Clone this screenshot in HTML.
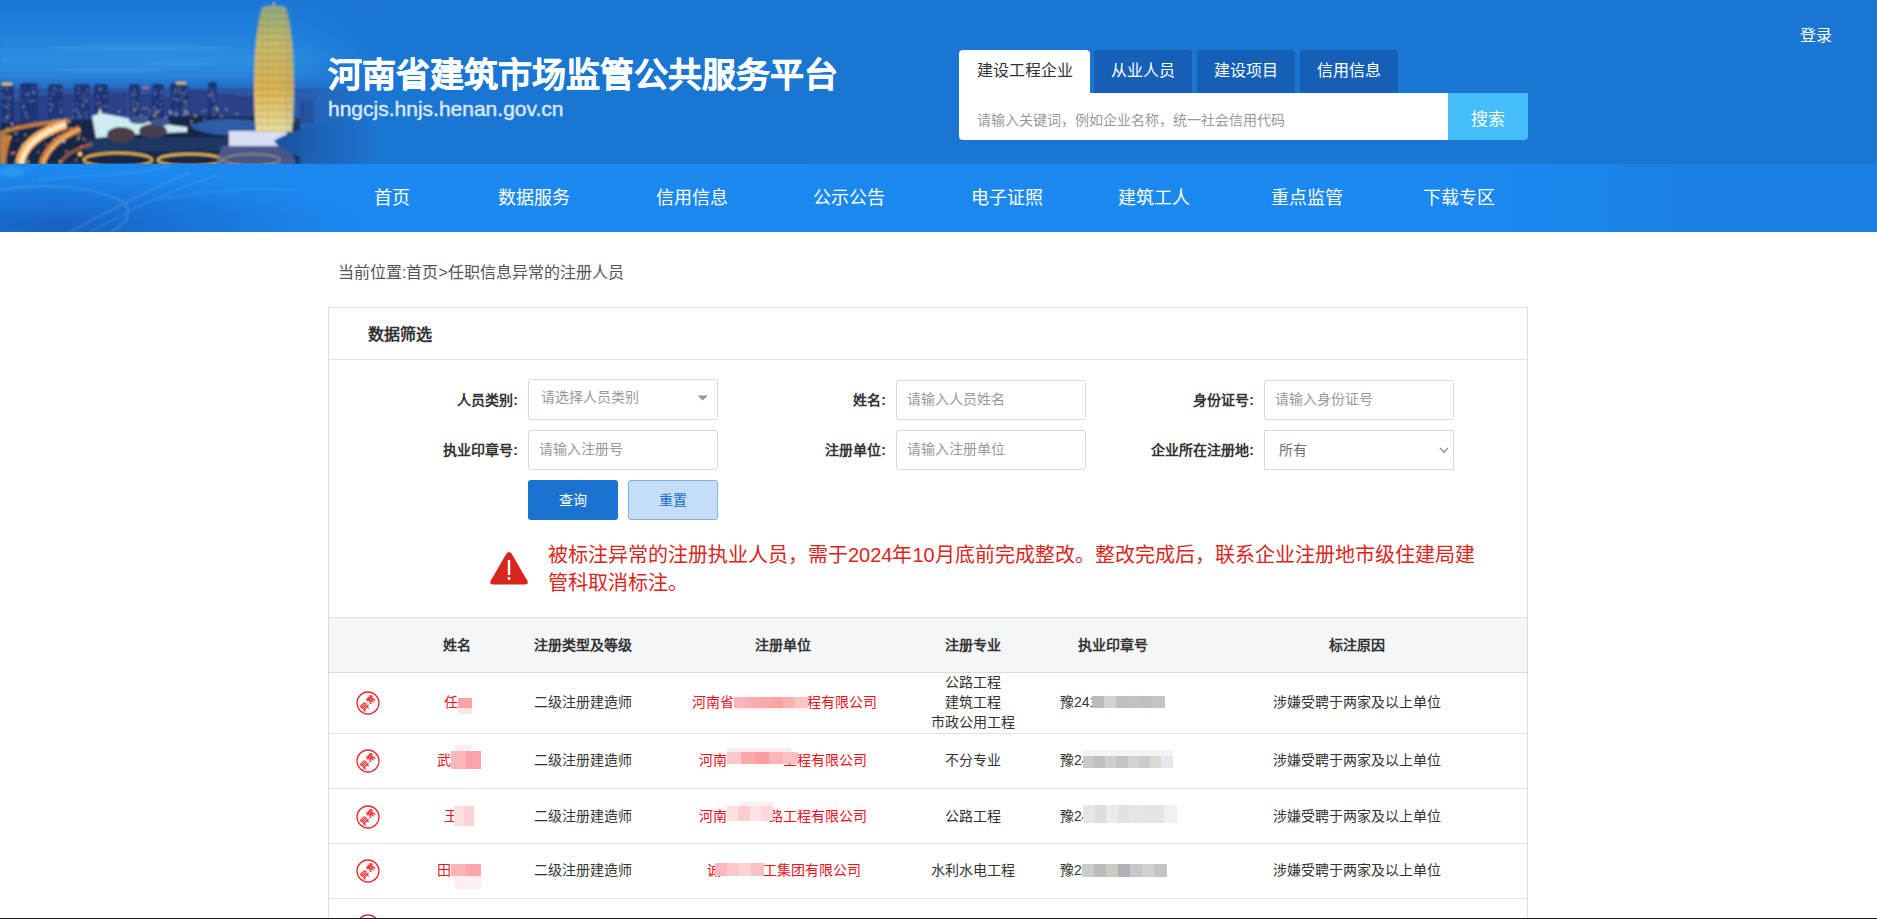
<!DOCTYPE html>
<html lang="zh-CN"><head><meta charset="utf-8">
<style>
*{margin:0;padding:0;box-sizing:border-box}
html,body{width:1877px;height:919px;overflow:hidden;background:#fff}
body{font-family:"Liberation Sans",sans-serif;position:relative;color:#333}
.abs{position:absolute;white-space:nowrap}
#hdr{position:absolute;left:0;top:0;width:1877px;height:164px;background:#1a76d3}
#nav{position:absolute;left:0;top:164px;width:1877px;height:68px;background:linear-gradient(90deg,#1b89f1 0%,#1b88f0 80%,#1a86ec 84%,#1a7fe2 91%,#1a80e3 100%)}
#city{position:absolute;left:0;top:0;width:380px;height:232px}
.title{left:328px;top:51px;font-size:34px;font-weight:bold;-webkit-text-stroke:0.4px #fff;color:#fff;line-height:48px}
.url{left:328px;top:96px;font-size:21px;color:#d6e5f6;line-height:26px;-webkit-text-stroke:0.5px #d6e5f6}
.login{left:1800px;top:25px;font-size:16px;color:#fff;line-height:22px}
.tab{position:absolute;top:50px;height:43px;background:#155fb6;border-radius:4px 4px 0 0;color:#fff;font-size:16px;line-height:42px;text-align:center}
.tab.on{background:#fff;color:#333}
.search{position:absolute;left:959px;top:93px;width:489px;height:47px;background:#fff;border-radius:0 0 0 4px}
.search span{position:absolute;left:18px;top:4px;line-height:47px;font-size:14px;color:#999}
.sbtn{position:absolute;left:1448px;top:93px;width:80px;height:47px;background:#45bdfb;border-radius:0 0 4px 0;color:#fff;font-size:17px;line-height:54px;text-align:center}
.nv{position:absolute;top:185px;font-size:18px;color:#fff;line-height:26px}
.crumb{left:338px;top:262px;font-size:16px;color:#555;line-height:22px}
#panel{position:absolute;left:328px;top:307px;width:1200px;height:700px;border:1px solid #dcdcdc;border-bottom:none}
.ph{position:absolute;left:0;top:0;width:1198px;height:52px;border-bottom:1px solid #e2e2e2}
.ph b{position:absolute;left:39px;top:15px;font-size:16px;line-height:24px;color:#333}
.lbl{position:absolute;font-size:14px;font-weight:bold;color:#333;line-height:20px;text-align:right}
.inp{position:absolute;width:190px;height:40px;border:1px solid #d9d9d9;border-radius:3px;background:#fff}
.inp span{position:absolute;left:10px;top:0;line-height:36px;font-size:14px;color:#999}
.btn{position:absolute;top:480px;width:90px;height:40px;border-radius:3px;font-size:14px;line-height:40px;text-align:center}
.warn{position:absolute;left:548px;top:541px;width:940px;font-size:20px;line-height:28px;color:#d9261c;white-space:normal}
#thead{position:absolute;left:329px;top:617px;width:1198px;height:56px;background:#f5f6f8;border-top:1px solid #dedede;border-bottom:1px solid #dedede}
.th{position:absolute;font-size:14px;font-weight:bold;color:#333;line-height:20px;text-align:center;white-space:nowrap}
.hr{position:absolute;left:329px;width:1198px;height:1px;background:#e0e0e0}
.td{position:absolute;font-size:14px;color:#333;line-height:20px;text-align:center;white-space:nowrap}
.red{color:#f2101a}
.stamp{position:absolute;left:356px;width:24px;height:24px}
</style></head><body>
<div id="hdr"></div>
<div id="nav"></div>
<svg id="city" width="380" height="232" viewBox="0 0 380 232">
<defs>
<linearGradient id="sky" x1="0" y1="0" x2="0" y2="164" gradientUnits="userSpaceOnUse"><stop offset="0" stop-color="#1a78d6"/><stop offset="0.2" stop-color="#1e80dc"/><stop offset="0.36" stop-color="#2d8fe2"/><stop offset="0.46" stop-color="#2a84da"/><stop offset="0.52" stop-color="#2470c8"/><stop offset="1" stop-color="#24509a"/></linearGradient>
<linearGradient id="tw" x1="0" y1="0" x2="0" y2="1"><stop offset="0" stop-color="#8eaa82"/><stop offset="0.3" stop-color="#c8bc6c"/><stop offset="0.65" stop-color="#dcb452"/><stop offset="1" stop-color="#ece2a4"/></linearGradient>
<linearGradient id="road" x1="0" y1="1" x2="1" y2="0"><stop offset="0" stop-color="#ffe8c0"/><stop offset="0.5" stop-color="#f0a040"/><stop offset="1" stop-color="#e88830"/></linearGradient>
<linearGradient id="fade" x1="0" y1="0" x2="1" y2="0"><stop offset="0" stop-color="#1a76d3" stop-opacity="0"/><stop offset="0.4" stop-color="#1a76d3" stop-opacity="0.5"/><stop offset="1" stop-color="#1a76d3" stop-opacity="1"/></linearGradient>
<filter id="soft" x="-5%" y="-5%" width="110%" height="110%"><feGaussianBlur stdDeviation="0.8"/></filter>
<clipPath id="imgclip"><rect x="0" y="0" width="380" height="164"/></clipPath>
</defs>
<g clip-path="url(#imgclip)"><g filter="url(#soft)"><rect x="0" y="0" width="380" height="164" fill="url(#sky)"/>
<ellipse cx="140" cy="48" rx="90" ry="3" fill="#b0d4f4" opacity="0.1"/>
<ellipse cx="110" cy="70" rx="60" ry="1.5" fill="#b0d4f4" opacity="0.15"/>
<ellipse cx="180" cy="64" rx="40" ry="1.5" fill="#b0d4f4" opacity="0.12"/>
<rect x="0" y="88" width="380" height="36" fill="#2e54a4"/>
<rect x="0" y="100" width="22" height="24" fill="#2a4088" rx="1"/>
<rect x="38" y="96" width="12" height="28" fill="#2a4088" rx="1"/>
<rect x="60" y="94" width="16" height="30" fill="#2a4088" rx="1"/>
<rect x="84" y="94" width="12" height="30" fill="#2a4088" rx="1"/>
<rect x="105" y="92" width="22" height="32" fill="#2a4088" rx="1"/>
<rect x="138" y="94" width="16" height="30" fill="#2a4088" rx="1"/>
<rect x="160" y="97" width="14" height="27" fill="#2a4088" rx="1"/>
<rect x="186" y="90" width="22" height="34" fill="#2a4088" rx="1"/>
<rect x="214" y="94" width="22" height="30" fill="#2a4088" rx="1"/>
<rect x="236" y="96" width="20" height="28" fill="#2a4088" rx="1"/>
<rect x="300" y="100" width="14" height="24" fill="#2a4088" rx="1"/>
<rect x="0" y="84" width="14" height="41" fill="#1e3478" rx="3"/>
<rect x="6.0" y="106.6" width="1.4" height="1.2" fill="#80a8e8" opacity="0.6"/>
<rect x="6.0" y="116.9" width="1.4" height="1.2" fill="#a8c8f8" opacity="0.6"/>
<rect x="3.0" y="104.9" width="1.4" height="1.2" fill="#a8c8f8" opacity="0.6"/>
<rect x="2.0" y="97.6" width="1.4" height="1.2" fill="#f0d080" opacity="0.6"/>
<rect x="6.9" y="118.2" width="1.4" height="1.2" fill="#f0d080" opacity="0.6"/>
<rect x="7.5" y="100.9" width="1.4" height="1.2" fill="#80a8e8" opacity="0.6"/>
<rect x="8.2" y="108.5" width="1.4" height="1.2" fill="#a8c8f8" opacity="0.6"/>
<rect x="7.9" y="116.1" width="1.4" height="1.2" fill="#f0d080" opacity="0.6"/>
<rect x="1.7" y="93.7" width="1.4" height="1.2" fill="#a8c8f8" opacity="0.6"/>
<rect x="7.6" y="114.2" width="1.4" height="1.2" fill="#e8e0c0" opacity="0.6"/>
<rect x="5.8" y="116.5" width="1.4" height="1.2" fill="#a8c8f8" opacity="0.6"/>
<rect x="8.0" y="104.5" width="1.4" height="1.2" fill="#f0d080" opacity="0.6"/>
<rect x="6.0" y="96.7" width="1.4" height="1.2" fill="#f0d080" opacity="0.6"/>
<rect x="8.8" y="98.0" width="1.4" height="1.2" fill="#a8c8f8" opacity="0.6"/>
<rect x="6.6" y="88.0" width="1.4" height="1.2" fill="#f0d080" opacity="0.6"/>
<rect x="5.4" y="116.6" width="1.4" height="1.2" fill="#80a8e8" opacity="0.6"/>
<rect x="1.7" y="87.6" width="1.4" height="1.2" fill="#f0d080" opacity="0.6"/>
<rect x="3.3" y="119.4" width="1.4" height="1.2" fill="#f0d080" opacity="0.6"/>
<rect x="6.2" y="121.3" width="1.4" height="1.2" fill="#80a8e8" opacity="0.6"/>
<rect x="5.6" y="106.8" width="1.4" height="1.2" fill="#a8c8f8" opacity="0.6"/>
<rect x="9.6" y="96.4" width="1.4" height="1.2" fill="#f0d080" opacity="0.6"/>
<rect x="4.4" y="87.5" width="1.4" height="1.2" fill="#80a8e8" opacity="0.6"/>
<rect x="20" y="83" width="18" height="42" fill="#1e3478" rx="3"/>
<rect x="32.4" y="90.2" width="1.4" height="1.2" fill="#a8c8f8" opacity="0.6"/>
<rect x="31.6" y="86.4" width="1.4" height="1.2" fill="#80a8e8" opacity="0.6"/>
<rect x="33.0" y="92.4" width="1.4" height="1.2" fill="#a8c8f8" opacity="0.6"/>
<rect x="27.7" y="92.9" width="1.4" height="1.2" fill="#a8c8f8" opacity="0.6"/>
<rect x="27.3" y="99.8" width="1.4" height="1.2" fill="#80a8e8" opacity="0.6"/>
<rect x="27.3" y="93.7" width="1.4" height="1.2" fill="#e8e0c0" opacity="0.6"/>
<rect x="34.0" y="121.1" width="1.4" height="1.2" fill="#e8e0c0" opacity="0.6"/>
<rect x="36.0" y="86.7" width="1.4" height="1.2" fill="#a8c8f8" opacity="0.6"/>
<rect x="26.9" y="116.8" width="1.4" height="1.2" fill="#f0d080" opacity="0.6"/>
<rect x="21.6" y="91.3" width="1.4" height="1.2" fill="#80a8e8" opacity="0.6"/>
<rect x="24.9" y="113.8" width="1.4" height="1.2" fill="#e8e0c0" opacity="0.6"/>
<rect x="33.5" y="99.9" width="1.4" height="1.2" fill="#f0d080" opacity="0.6"/>
<rect x="22.4" y="107.0" width="1.4" height="1.2" fill="#a8c8f8" opacity="0.6"/>
<rect x="21.2" y="99.3" width="1.4" height="1.2" fill="#80a8e8" opacity="0.6"/>
<rect x="22.9" y="107.1" width="1.4" height="1.2" fill="#a8c8f8" opacity="0.6"/>
<rect x="34.0" y="92.6" width="1.4" height="1.2" fill="#a8c8f8" opacity="0.6"/>
<rect x="25.7" y="94.2" width="1.4" height="1.2" fill="#a8c8f8" opacity="0.6"/>
<rect x="31.9" y="91.7" width="1.4" height="1.2" fill="#a8c8f8" opacity="0.6"/>
<rect x="31.3" y="100.0" width="1.4" height="1.2" fill="#80a8e8" opacity="0.6"/>
<rect x="30.1" y="101.2" width="1.4" height="1.2" fill="#f0d080" opacity="0.6"/>
<rect x="22.6" y="104.4" width="1.4" height="1.2" fill="#e8e0c0" opacity="0.6"/>
<rect x="24.6" y="111.4" width="1.4" height="1.2" fill="#e8e0c0" opacity="0.6"/>
<rect x="48" y="84" width="15" height="41" fill="#1e3478" rx="3"/>
<rect x="54.0" y="118.7" width="1.4" height="1.2" fill="#80a8e8" opacity="0.6"/>
<rect x="52.5" y="93.1" width="1.4" height="1.2" fill="#f0d080" opacity="0.6"/>
<rect x="50.5" y="103.8" width="1.4" height="1.2" fill="#f0d080" opacity="0.6"/>
<rect x="52.4" y="119.1" width="1.4" height="1.2" fill="#a8c8f8" opacity="0.6"/>
<rect x="58.0" y="89.4" width="1.4" height="1.2" fill="#80a8e8" opacity="0.6"/>
<rect x="54.3" y="89.1" width="1.4" height="1.2" fill="#a8c8f8" opacity="0.6"/>
<rect x="52.4" y="105.6" width="1.4" height="1.2" fill="#a8c8f8" opacity="0.6"/>
<rect x="50.1" y="91.8" width="1.4" height="1.2" fill="#80a8e8" opacity="0.6"/>
<rect x="60.8" y="110.0" width="1.4" height="1.2" fill="#a8c8f8" opacity="0.6"/>
<rect x="56.1" y="119.3" width="1.4" height="1.2" fill="#80a8e8" opacity="0.6"/>
<rect x="59.9" y="111.5" width="1.4" height="1.2" fill="#f0d080" opacity="0.6"/>
<rect x="49.3" y="109.3" width="1.4" height="1.2" fill="#80a8e8" opacity="0.6"/>
<rect x="49.8" y="97.9" width="1.4" height="1.2" fill="#a8c8f8" opacity="0.6"/>
<rect x="61.0" y="89.6" width="1.4" height="1.2" fill="#e8e0c0" opacity="0.6"/>
<rect x="57.8" y="118.5" width="1.4" height="1.2" fill="#a8c8f8" opacity="0.6"/>
<rect x="58.5" y="119.0" width="1.4" height="1.2" fill="#e8e0c0" opacity="0.6"/>
<rect x="50.0" y="103.6" width="1.4" height="1.2" fill="#f0d080" opacity="0.6"/>
<rect x="59.5" y="101.6" width="1.4" height="1.2" fill="#f0d080" opacity="0.6"/>
<rect x="59.4" y="107.0" width="1.4" height="1.2" fill="#80a8e8" opacity="0.6"/>
<rect x="53.6" y="87.4" width="1.4" height="1.2" fill="#f0d080" opacity="0.6"/>
<rect x="50.0" y="109.4" width="1.4" height="1.2" fill="#e8e0c0" opacity="0.6"/>
<rect x="59.6" y="112.5" width="1.4" height="1.2" fill="#80a8e8" opacity="0.6"/>
<rect x="74" y="84" width="16" height="41" fill="#1e3478" rx="3"/>
<rect x="87.1" y="111.3" width="1.4" height="1.2" fill="#80a8e8" opacity="0.6"/>
<rect x="80.7" y="116.3" width="1.4" height="1.2" fill="#f0d080" opacity="0.6"/>
<rect x="81.7" y="105.0" width="1.4" height="1.2" fill="#e8e0c0" opacity="0.6"/>
<rect x="82.8" y="103.8" width="1.4" height="1.2" fill="#a8c8f8" opacity="0.6"/>
<rect x="87.4" y="91.0" width="1.4" height="1.2" fill="#80a8e8" opacity="0.6"/>
<rect x="78.3" y="87.4" width="1.4" height="1.2" fill="#e8e0c0" opacity="0.6"/>
<rect x="76.9" y="108.4" width="1.4" height="1.2" fill="#a8c8f8" opacity="0.6"/>
<rect x="84.8" y="99.0" width="1.4" height="1.2" fill="#80a8e8" opacity="0.6"/>
<rect x="81.5" y="95.5" width="1.4" height="1.2" fill="#80a8e8" opacity="0.6"/>
<rect x="83.7" y="93.9" width="1.4" height="1.2" fill="#80a8e8" opacity="0.6"/>
<rect x="85.4" y="113.4" width="1.4" height="1.2" fill="#a8c8f8" opacity="0.6"/>
<rect x="86.4" y="100.5" width="1.4" height="1.2" fill="#e8e0c0" opacity="0.6"/>
<rect x="77.7" y="91.7" width="1.4" height="1.2" fill="#e8e0c0" opacity="0.6"/>
<rect x="85.9" y="116.7" width="1.4" height="1.2" fill="#f0d080" opacity="0.6"/>
<rect x="87.4" y="96.7" width="1.4" height="1.2" fill="#a8c8f8" opacity="0.6"/>
<rect x="76.5" y="103.5" width="1.4" height="1.2" fill="#a8c8f8" opacity="0.6"/>
<rect x="85.8" y="100.4" width="1.4" height="1.2" fill="#80a8e8" opacity="0.6"/>
<rect x="83.7" y="112.1" width="1.4" height="1.2" fill="#80a8e8" opacity="0.6"/>
<rect x="79.2" y="116.0" width="1.4" height="1.2" fill="#e8e0c0" opacity="0.6"/>
<rect x="86.3" y="88.5" width="1.4" height="1.2" fill="#e8e0c0" opacity="0.6"/>
<rect x="82.4" y="97.8" width="1.4" height="1.2" fill="#f0d080" opacity="0.6"/>
<rect x="83.3" y="101.2" width="1.4" height="1.2" fill="#a8c8f8" opacity="0.6"/>
<rect x="94" y="84" width="14" height="41" fill="#1e3478" rx="3"/>
<rect x="95.3" y="116.0" width="1.4" height="1.2" fill="#a8c8f8" opacity="0.6"/>
<rect x="103.6" y="114.9" width="1.4" height="1.2" fill="#f0d080" opacity="0.6"/>
<rect x="99.9" y="109.0" width="1.4" height="1.2" fill="#e8e0c0" opacity="0.6"/>
<rect x="105.5" y="111.0" width="1.4" height="1.2" fill="#a8c8f8" opacity="0.6"/>
<rect x="104.1" y="96.0" width="1.4" height="1.2" fill="#f0d080" opacity="0.6"/>
<rect x="103.3" y="105.7" width="1.4" height="1.2" fill="#f0d080" opacity="0.6"/>
<rect x="97.0" y="96.5" width="1.4" height="1.2" fill="#e8e0c0" opacity="0.6"/>
<rect x="100.9" y="120.1" width="1.4" height="1.2" fill="#a8c8f8" opacity="0.6"/>
<rect x="99.3" y="114.7" width="1.4" height="1.2" fill="#a8c8f8" opacity="0.6"/>
<rect x="96.0" y="119.6" width="1.4" height="1.2" fill="#80a8e8" opacity="0.6"/>
<rect x="96.4" y="102.9" width="1.4" height="1.2" fill="#f0d080" opacity="0.6"/>
<rect x="99.1" y="106.9" width="1.4" height="1.2" fill="#e8e0c0" opacity="0.6"/>
<rect x="100.1" y="109.8" width="1.4" height="1.2" fill="#a8c8f8" opacity="0.6"/>
<rect x="96.1" y="117.3" width="1.4" height="1.2" fill="#f0d080" opacity="0.6"/>
<rect x="97.3" y="118.5" width="1.4" height="1.2" fill="#f0d080" opacity="0.6"/>
<rect x="105.8" y="105.8" width="1.4" height="1.2" fill="#e8e0c0" opacity="0.6"/>
<rect x="97.9" y="112.1" width="1.4" height="1.2" fill="#f0d080" opacity="0.6"/>
<rect x="98.8" y="89.9" width="1.4" height="1.2" fill="#80a8e8" opacity="0.6"/>
<rect x="98.8" y="101.7" width="1.4" height="1.2" fill="#e8e0c0" opacity="0.6"/>
<rect x="100.4" y="88.0" width="1.4" height="1.2" fill="#f0d080" opacity="0.6"/>
<rect x="99.7" y="88.2" width="1.4" height="1.2" fill="#e8e0c0" opacity="0.6"/>
<rect x="102.6" y="119.1" width="1.4" height="1.2" fill="#80a8e8" opacity="0.6"/>
<rect x="129" y="84" width="11" height="41" fill="#1e3478" rx="3"/>
<rect x="131.2" y="105.1" width="1.4" height="1.2" fill="#80a8e8" opacity="0.6"/>
<rect x="137.6" y="104.2" width="1.4" height="1.2" fill="#f0d080" opacity="0.6"/>
<rect x="136.1" y="102.4" width="1.4" height="1.2" fill="#e8e0c0" opacity="0.6"/>
<rect x="136.6" y="106.7" width="1.4" height="1.2" fill="#a8c8f8" opacity="0.6"/>
<rect x="134.2" y="116.5" width="1.4" height="1.2" fill="#e8e0c0" opacity="0.6"/>
<rect x="132.5" y="100.3" width="1.4" height="1.2" fill="#a8c8f8" opacity="0.6"/>
<rect x="132.4" y="91.9" width="1.4" height="1.2" fill="#e8e0c0" opacity="0.6"/>
<rect x="134.6" y="94.0" width="1.4" height="1.2" fill="#f0d080" opacity="0.6"/>
<rect x="134.0" y="108.2" width="1.4" height="1.2" fill="#f0d080" opacity="0.6"/>
<rect x="134.3" y="88.5" width="1.4" height="1.2" fill="#80a8e8" opacity="0.6"/>
<rect x="134.4" y="121.6" width="1.4" height="1.2" fill="#f0d080" opacity="0.6"/>
<rect x="133.9" y="111.2" width="1.4" height="1.2" fill="#f0d080" opacity="0.6"/>
<rect x="137.4" y="103.1" width="1.4" height="1.2" fill="#80a8e8" opacity="0.6"/>
<rect x="132.2" y="103.6" width="1.4" height="1.2" fill="#a8c8f8" opacity="0.6"/>
<rect x="132.7" y="118.5" width="1.4" height="1.2" fill="#80a8e8" opacity="0.6"/>
<rect x="134.2" y="90.8" width="1.4" height="1.2" fill="#80a8e8" opacity="0.6"/>
<rect x="134.9" y="119.4" width="1.4" height="1.2" fill="#a8c8f8" opacity="0.6"/>
<rect x="135.6" y="121.2" width="1.4" height="1.2" fill="#f0d080" opacity="0.6"/>
<rect x="131.6" y="95.0" width="1.4" height="1.2" fill="#e8e0c0" opacity="0.6"/>
<rect x="132.6" y="99.4" width="1.4" height="1.2" fill="#80a8e8" opacity="0.6"/>
<rect x="130.8" y="112.6" width="1.4" height="1.2" fill="#f0d080" opacity="0.6"/>
<rect x="136.8" y="108.8" width="1.4" height="1.2" fill="#a8c8f8" opacity="0.6"/>
<rect x="152" y="84" width="12" height="41" fill="#1e3478" rx="3"/>
<rect x="159.3" y="117.8" width="1.4" height="1.2" fill="#f0d080" opacity="0.6"/>
<rect x="156.4" y="101.5" width="1.4" height="1.2" fill="#a8c8f8" opacity="0.6"/>
<rect x="157.8" y="117.2" width="1.4" height="1.2" fill="#a8c8f8" opacity="0.6"/>
<rect x="157.8" y="116.8" width="1.4" height="1.2" fill="#a8c8f8" opacity="0.6"/>
<rect x="155.1" y="112.9" width="1.4" height="1.2" fill="#e8e0c0" opacity="0.6"/>
<rect x="161.1" y="98.1" width="1.4" height="1.2" fill="#e8e0c0" opacity="0.6"/>
<rect x="161.0" y="93.8" width="1.4" height="1.2" fill="#a8c8f8" opacity="0.6"/>
<rect x="161.0" y="91.7" width="1.4" height="1.2" fill="#a8c8f8" opacity="0.6"/>
<rect x="154.2" y="90.1" width="1.4" height="1.2" fill="#80a8e8" opacity="0.6"/>
<rect x="153.9" y="116.1" width="1.4" height="1.2" fill="#80a8e8" opacity="0.6"/>
<rect x="157.9" y="111.7" width="1.4" height="1.2" fill="#a8c8f8" opacity="0.6"/>
<rect x="156.6" y="111.0" width="1.4" height="1.2" fill="#f0d080" opacity="0.6"/>
<rect x="153.9" y="106.9" width="1.4" height="1.2" fill="#e8e0c0" opacity="0.6"/>
<rect x="161.2" y="120.9" width="1.4" height="1.2" fill="#f0d080" opacity="0.6"/>
<rect x="159.3" y="109.2" width="1.4" height="1.2" fill="#e8e0c0" opacity="0.6"/>
<rect x="157.5" y="111.0" width="1.4" height="1.2" fill="#a8c8f8" opacity="0.6"/>
<rect x="160.2" y="103.9" width="1.4" height="1.2" fill="#f0d080" opacity="0.6"/>
<rect x="153.3" y="106.3" width="1.4" height="1.2" fill="#80a8e8" opacity="0.6"/>
<rect x="154.3" y="93.5" width="1.4" height="1.2" fill="#a8c8f8" opacity="0.6"/>
<rect x="154.6" y="92.5" width="1.4" height="1.2" fill="#e8e0c0" opacity="0.6"/>
<rect x="161.3" y="90.3" width="1.4" height="1.2" fill="#f0d080" opacity="0.6"/>
<rect x="154.2" y="110.8" width="1.4" height="1.2" fill="#f0d080" opacity="0.6"/>
<rect x="170" y="83" width="16" height="42" fill="#1e3478" rx="3"/>
<rect x="180.9" y="97.8" width="1.4" height="1.2" fill="#80a8e8" opacity="0.6"/>
<rect x="176.5" y="98.8" width="1.4" height="1.2" fill="#a8c8f8" opacity="0.6"/>
<rect x="178.8" y="86.5" width="1.4" height="1.2" fill="#f0d080" opacity="0.6"/>
<rect x="182.0" y="92.5" width="1.4" height="1.2" fill="#80a8e8" opacity="0.6"/>
<rect x="175.7" y="99.3" width="1.4" height="1.2" fill="#a8c8f8" opacity="0.6"/>
<rect x="178.9" y="89.4" width="1.4" height="1.2" fill="#f0d080" opacity="0.6"/>
<rect x="175.2" y="89.1" width="1.4" height="1.2" fill="#80a8e8" opacity="0.6"/>
<rect x="178.4" y="92.9" width="1.4" height="1.2" fill="#e8e0c0" opacity="0.6"/>
<rect x="181.5" y="95.3" width="1.4" height="1.2" fill="#f0d080" opacity="0.6"/>
<rect x="180.7" y="114.0" width="1.4" height="1.2" fill="#80a8e8" opacity="0.6"/>
<rect x="172.7" y="97.9" width="1.4" height="1.2" fill="#e8e0c0" opacity="0.6"/>
<rect x="181.0" y="113.5" width="1.4" height="1.2" fill="#80a8e8" opacity="0.6"/>
<rect x="173.7" y="92.7" width="1.4" height="1.2" fill="#e8e0c0" opacity="0.6"/>
<rect x="174.9" y="89.6" width="1.4" height="1.2" fill="#e8e0c0" opacity="0.6"/>
<rect x="183.9" y="118.5" width="1.4" height="1.2" fill="#f0d080" opacity="0.6"/>
<rect x="174.0" y="120.0" width="1.4" height="1.2" fill="#e8e0c0" opacity="0.6"/>
<rect x="175.4" y="109.8" width="1.4" height="1.2" fill="#a8c8f8" opacity="0.6"/>
<rect x="177.9" y="100.0" width="1.4" height="1.2" fill="#80a8e8" opacity="0.6"/>
<rect x="179.3" y="111.2" width="1.4" height="1.2" fill="#80a8e8" opacity="0.6"/>
<rect x="183.7" y="86.8" width="1.4" height="1.2" fill="#f0d080" opacity="0.6"/>
<rect x="180.6" y="95.2" width="1.4" height="1.2" fill="#80a8e8" opacity="0.6"/>
<rect x="177.6" y="113.4" width="1.4" height="1.2" fill="#80a8e8" opacity="0.6"/>
<rect x="208" y="82" width="9" height="43" fill="#1e3478" rx="3"/>
<rect x="209.1" y="94.6" width="1.4" height="1.2" fill="#e8e0c0" opacity="0.6"/>
<rect x="214.4" y="105.4" width="1.4" height="1.2" fill="#80a8e8" opacity="0.6"/>
<rect x="214.8" y="106.0" width="1.4" height="1.2" fill="#f0d080" opacity="0.6"/>
<rect x="212.8" y="115.0" width="1.4" height="1.2" fill="#f0d080" opacity="0.6"/>
<rect x="212.3" y="109.7" width="1.4" height="1.2" fill="#f0d080" opacity="0.6"/>
<rect x="211.3" y="119.7" width="1.4" height="1.2" fill="#80a8e8" opacity="0.6"/>
<rect x="211.8" y="91.3" width="1.4" height="1.2" fill="#80a8e8" opacity="0.6"/>
<rect x="212.3" y="107.1" width="1.4" height="1.2" fill="#80a8e8" opacity="0.6"/>
<rect x="214.7" y="100.6" width="1.4" height="1.2" fill="#80a8e8" opacity="0.6"/>
<rect x="212.6" y="98.5" width="1.4" height="1.2" fill="#e8e0c0" opacity="0.6"/>
<rect x="211.9" y="95.0" width="1.4" height="1.2" fill="#e8e0c0" opacity="0.6"/>
<rect x="213.0" y="112.7" width="1.4" height="1.2" fill="#f0d080" opacity="0.6"/>
<rect x="209.1" y="94.1" width="1.4" height="1.2" fill="#f0d080" opacity="0.6"/>
<rect x="212.8" y="100.1" width="1.4" height="1.2" fill="#80a8e8" opacity="0.6"/>
<rect x="209.3" y="96.7" width="1.4" height="1.2" fill="#80a8e8" opacity="0.6"/>
<rect x="209.3" y="121.6" width="1.4" height="1.2" fill="#e8e0c0" opacity="0.6"/>
<rect x="209.4" y="118.5" width="1.4" height="1.2" fill="#80a8e8" opacity="0.6"/>
<rect x="213.3" y="94.3" width="1.4" height="1.2" fill="#a8c8f8" opacity="0.6"/>
<rect x="209.3" y="88.6" width="1.4" height="1.2" fill="#80a8e8" opacity="0.6"/>
<rect x="209.9" y="120.5" width="1.4" height="1.2" fill="#a8c8f8" opacity="0.6"/>
<rect x="212.6" y="89.3" width="1.4" height="1.2" fill="#80a8e8" opacity="0.6"/>
<rect x="211.7" y="92.5" width="1.4" height="1.2" fill="#f0d080" opacity="0.6"/>
<rect x="180" y="86" width="9" height="39" fill="#1e3478" rx="3"/>
<rect x="183.1" y="94.1" width="1.4" height="1.2" fill="#e8e0c0" opacity="0.6"/>
<rect x="183.7" y="111.0" width="1.4" height="1.2" fill="#80a8e8" opacity="0.6"/>
<rect x="184.6" y="110.1" width="1.4" height="1.2" fill="#80a8e8" opacity="0.6"/>
<rect x="183.2" y="113.5" width="1.4" height="1.2" fill="#a8c8f8" opacity="0.6"/>
<rect x="186.7" y="113.2" width="1.4" height="1.2" fill="#a8c8f8" opacity="0.6"/>
<rect x="183.9" y="105.6" width="1.4" height="1.2" fill="#e8e0c0" opacity="0.6"/>
<rect x="185.7" y="109.6" width="1.4" height="1.2" fill="#e8e0c0" opacity="0.6"/>
<rect x="182.6" y="109.1" width="1.4" height="1.2" fill="#a8c8f8" opacity="0.6"/>
<rect x="184.8" y="113.9" width="1.4" height="1.2" fill="#a8c8f8" opacity="0.6"/>
<rect x="186.7" y="105.6" width="1.4" height="1.2" fill="#a8c8f8" opacity="0.6"/>
<rect x="186.3" y="90.3" width="1.4" height="1.2" fill="#f0d080" opacity="0.6"/>
<rect x="181.1" y="97.6" width="1.4" height="1.2" fill="#f0d080" opacity="0.6"/>
<rect x="184.7" y="92.4" width="1.4" height="1.2" fill="#e8e0c0" opacity="0.6"/>
<rect x="181.4" y="91.9" width="1.4" height="1.2" fill="#a8c8f8" opacity="0.6"/>
<rect x="184.3" y="109.8" width="1.4" height="1.2" fill="#e8e0c0" opacity="0.6"/>
<rect x="183.9" y="100.7" width="1.4" height="1.2" fill="#e8e0c0" opacity="0.6"/>
<rect x="183.1" y="113.6" width="1.4" height="1.2" fill="#f0d080" opacity="0.6"/>
<rect x="185.8" y="103.8" width="1.4" height="1.2" fill="#a8c8f8" opacity="0.6"/>
<rect x="183.7" y="113.7" width="1.4" height="1.2" fill="#80a8e8" opacity="0.6"/>
<rect x="185.9" y="101.2" width="1.4" height="1.2" fill="#e8e0c0" opacity="0.6"/>
<rect x="182.7" y="114.0" width="1.4" height="1.2" fill="#a8c8f8" opacity="0.6"/>
<rect x="183.6" y="101.2" width="1.4" height="1.2" fill="#f0d080" opacity="0.6"/>
<rect x="2" y="83" width="10" height="2.5" fill="#f8d840" opacity="0.9"/>
<rect x="176" y="82" width="10" height="2.5" fill="#f8d040" opacity="0.85"/>
<rect x="143" y="87" width="5" height="2" fill="#f06040" opacity="0.8"/>
<path d="M0 124 L80 120 L200 116 L300 118 L300 164 L0 164Z" fill="#142848"/>
<path d="M85 140 C130 136 200 140 300 135 L300 150 L85 152Z" fill="#1e3c6c" opacity="0.8"/>
<circle cx="170.9" cy="113.2" r="1.0" fill="#ffd890" opacity="0.75"/>
<circle cx="195.4" cy="115.8" r="1.1" fill="#ffd890" opacity="0.75"/>
<circle cx="257.6" cy="108.1" r="0.8" fill="#a0c8ff" opacity="0.75"/>
<circle cx="204.9" cy="119.1" r="0.9" fill="#a0c8ff" opacity="0.75"/>
<circle cx="138.7" cy="122.1" r="0.8" fill="#a0c8ff" opacity="0.75"/>
<circle cx="234.2" cy="113.9" r="0.7" fill="#a0c8ff" opacity="0.75"/>
<circle cx="165.8" cy="117.5" r="1.2" fill="#a0c8ff" opacity="0.75"/>
<circle cx="279.2" cy="115.0" r="1.2" fill="#ffd890" opacity="0.75"/>
<circle cx="170.0" cy="111.5" r="1.3" fill="#a0c8ff" opacity="0.75"/>
<circle cx="274.7" cy="112.0" r="0.9" fill="#ffd890" opacity="0.75"/>
<circle cx="65.8" cy="118.8" r="1.0" fill="#f0b050" opacity="0.75"/>
<circle cx="237.3" cy="113.9" r="0.9" fill="#f0b050" opacity="0.75"/>
<circle cx="260.7" cy="117.0" r="0.7" fill="#ffd890" opacity="0.75"/>
<circle cx="271.4" cy="112.5" r="0.6" fill="#a0c8ff" opacity="0.75"/>
<circle cx="73.9" cy="110.5" r="0.8" fill="#f0b050" opacity="0.75"/>
<circle cx="216.3" cy="120.9" r="0.6" fill="#a0c8ff" opacity="0.75"/>
<circle cx="133.3" cy="116.7" r="0.8" fill="#ffd890" opacity="0.75"/>
<circle cx="236.9" cy="122.4" r="0.7" fill="#a0c8ff" opacity="0.75"/>
<circle cx="216.8" cy="109.6" r="1.2" fill="#ffd890" opacity="0.75"/>
<circle cx="118.9" cy="111.5" r="1.1" fill="#a0c8ff" opacity="0.75"/>
<circle cx="141.2" cy="115.3" r="0.8" fill="#ffd890" opacity="0.75"/>
<circle cx="221.4" cy="115.9" r="1.0" fill="#a0c8ff" opacity="0.75"/>
<circle cx="77.4" cy="117.9" r="0.6" fill="#a0c8ff" opacity="0.75"/>
<circle cx="143.8" cy="108.1" r="0.9" fill="#f0b050" opacity="0.75"/>
<circle cx="273.3" cy="123.3" r="1.0" fill="#a0c8ff" opacity="0.75"/>
<circle cx="146.9" cy="108.2" r="0.7" fill="#ffd890" opacity="0.75"/>
<circle cx="279.7" cy="111.9" r="0.7" fill="#a0c8ff" opacity="0.75"/>
<circle cx="150.1" cy="110.7" r="0.7" fill="#ffd890" opacity="0.75"/>
<circle cx="187.0" cy="112.4" r="1.2" fill="#ffd890" opacity="0.75"/>
<circle cx="134.0" cy="109.8" r="1.1" fill="#f0b050" opacity="0.75"/>
<circle cx="278.9" cy="120.1" r="0.6" fill="#ffd890" opacity="0.75"/>
<circle cx="278.2" cy="108.6" r="0.7" fill="#f0b050" opacity="0.75"/>
<circle cx="146.2" cy="117.4" r="1.0" fill="#ffd890" opacity="0.75"/>
<circle cx="202.7" cy="111.6" r="0.7" fill="#ffd890" opacity="0.75"/>
<circle cx="156.6" cy="122.6" r="1.3" fill="#a0c8ff" opacity="0.75"/>
<circle cx="191.6" cy="121.1" r="0.9" fill="#ffd890" opacity="0.75"/>
<circle cx="176.3" cy="114.4" r="1.3" fill="#a0c8ff" opacity="0.75"/>
<circle cx="191.4" cy="123.3" r="0.9" fill="#f0b050" opacity="0.75"/>
<circle cx="155.9" cy="111.5" r="0.7" fill="#ffd890" opacity="0.75"/>
<circle cx="294.2" cy="120.7" r="1.1" fill="#f0b050" opacity="0.75"/>
<circle cx="217.8" cy="111.8" r="0.6" fill="#ffd890" opacity="0.75"/>
<circle cx="277.3" cy="115.2" r="0.8" fill="#ffd890" opacity="0.75"/>
<circle cx="205.5" cy="110.5" r="0.7" fill="#ffd890" opacity="0.75"/>
<circle cx="94.7" cy="122.5" r="1.2" fill="#f0b050" opacity="0.75"/>
<circle cx="212.9" cy="123.9" r="0.8" fill="#a0c8ff" opacity="0.75"/>
<circle cx="72.7" cy="117.2" r="0.7" fill="#f0b050" opacity="0.75"/>
<circle cx="257.1" cy="121.5" r="1.2" fill="#f0b050" opacity="0.75"/>
<circle cx="144.4" cy="117.8" r="1.0" fill="#ffd890" opacity="0.75"/>
<circle cx="226.5" cy="109.3" r="1.1" fill="#a0c8ff" opacity="0.75"/>
<circle cx="265.8" cy="112.9" r="1.2" fill="#ffd890" opacity="0.75"/>
<circle cx="106.3" cy="118.9" r="1.1" fill="#ffd890" opacity="0.75"/>
<circle cx="110.0" cy="116.7" r="1.0" fill="#f0b050" opacity="0.75"/>
<circle cx="287.2" cy="123.4" r="0.8" fill="#ffd890" opacity="0.75"/>
<circle cx="78.2" cy="112.9" r="0.9" fill="#a0c8ff" opacity="0.75"/>
<circle cx="76.1" cy="109.2" r="0.7" fill="#a0c8ff" opacity="0.75"/>
<circle cx="154.6" cy="115.4" r="1.3" fill="#f0b050" opacity="0.75"/>
<circle cx="216.9" cy="108.2" r="0.9" fill="#a0c8ff" opacity="0.75"/>
<circle cx="174.1" cy="112.7" r="0.7" fill="#f0b050" opacity="0.75"/>
<circle cx="265.5" cy="121.5" r="1.1" fill="#a0c8ff" opacity="0.75"/>
<circle cx="96.5" cy="118.0" r="1.3" fill="#a0c8ff" opacity="0.75"/>
<path d="M0 134 C10 128 30 124 70 121" stroke="#e89038" stroke-width="4" fill="none" opacity="0.8"/>
<path d="M0 164 L0 136 C4 134 8 134 12 136 C8 146 6 156 6 164Z" fill="#e88a34" opacity="0.85"/>
<path d="M20 164 C22 148 34 134 66 124" stroke="#f4b050" stroke-width="10" fill="none"/>
<path d="M21 164 C24 148 36 134 66 124" stroke="#fff0d8" stroke-width="4" fill="none" opacity="0.9"/>
<path d="M42 164 C46 150 56 138 80 129" stroke="#e88838" stroke-width="7" fill="none" opacity="0.9"/>
<path d="M43 164 C48 150 58 138 80 129" stroke="#f8c880" stroke-width="2" fill="none" opacity="0.8"/>
<path d="M60 164 C64 156 72 150 92 144" stroke="#d06a30" stroke-width="3" fill="none" opacity="0.7"/>
<circle cx="25.3" cy="134.8" r="0.9" fill="#fff4e0" opacity="0.7"/>
<circle cx="7.4" cy="128.3" r="0.9" fill="#ffe0a0" opacity="0.7"/>
<circle cx="28.0" cy="161.6" r="1.1" fill="#fff4e0" opacity="0.7"/>
<circle cx="54.4" cy="139.7" r="0.9" fill="#ffe0a0" opacity="0.7"/>
<circle cx="12.0" cy="124.2" r="1.1" fill="#fff4e0" opacity="0.7"/>
<circle cx="15.2" cy="128.5" r="0.6" fill="#ff9050" opacity="0.7"/>
<circle cx="50.4" cy="124.0" r="0.8" fill="#ffe0a0" opacity="0.7"/>
<circle cx="83.9" cy="139.1" r="1.2" fill="#ff9050" opacity="0.7"/>
<circle cx="78.3" cy="138.8" r="1.0" fill="#fff4e0" opacity="0.7"/>
<circle cx="17.5" cy="126.5" r="1.2" fill="#ff9050" opacity="0.7"/>
<circle cx="28.2" cy="138.1" r="0.6" fill="#ff9050" opacity="0.7"/>
<circle cx="52.1" cy="134.0" r="1.2" fill="#ffe0a0" opacity="0.7"/>
<circle cx="56.1" cy="146.8" r="0.6" fill="#ff9050" opacity="0.7"/>
<circle cx="16.0" cy="133.5" r="1.0" fill="#fff4e0" opacity="0.7"/>
<circle cx="32.1" cy="142.4" r="1.2" fill="#ffe0a0" opacity="0.7"/>
<circle cx="52.0" cy="127.0" r="1.2" fill="#ff9050" opacity="0.7"/>
<circle cx="46.6" cy="135.5" r="1.0" fill="#ffe0a0" opacity="0.7"/>
<circle cx="48.8" cy="128.7" r="1.3" fill="#fff4e0" opacity="0.7"/>
<circle cx="60.1" cy="161.2" r="1.1" fill="#ffe0a0" opacity="0.7"/>
<circle cx="53.3" cy="128.7" r="0.7" fill="#ffe0a0" opacity="0.7"/>
<circle cx="40.6" cy="138.4" r="0.9" fill="#ffe0a0" opacity="0.7"/>
<circle cx="79.0" cy="135.9" r="1.0" fill="#ffe0a0" opacity="0.7"/>
<circle cx="38.4" cy="152.1" r="0.8" fill="#fff4e0" opacity="0.7"/>
<circle cx="46.2" cy="144.7" r="1.0" fill="#ff9050" opacity="0.7"/>
<circle cx="14.3" cy="152.8" r="1.3" fill="#ff9050" opacity="0.7"/>
<circle cx="51.1" cy="125.4" r="1.3" fill="#ff9050" opacity="0.7"/>
<circle cx="58.2" cy="136.0" r="1.2" fill="#ff9050" opacity="0.7"/>
<circle cx="70.6" cy="128.2" r="1.0" fill="#ffe0a0" opacity="0.7"/>
<circle cx="38.6" cy="137.7" r="1.2" fill="#fff4e0" opacity="0.7"/>
<circle cx="11.8" cy="153.3" r="1.3" fill="#ff9050" opacity="0.7"/>
<circle cx="52.3" cy="148.2" r="1.2" fill="#ffe0a0" opacity="0.7"/>
<circle cx="17.0" cy="140.6" r="0.7" fill="#ff9050" opacity="0.7"/>
<circle cx="10.1" cy="137.9" r="0.9" fill="#ffe0a0" opacity="0.7"/>
<circle cx="22.4" cy="145.0" r="0.9" fill="#fff4e0" opacity="0.7"/>
<circle cx="66.6" cy="151.8" r="1.2" fill="#ff9050" opacity="0.7"/>
<circle cx="81.5" cy="146.4" r="1.0" fill="#ff9050" opacity="0.7"/>
<circle cx="76.2" cy="160.2" r="1.1" fill="#ff9050" opacity="0.7"/>
<circle cx="63.9" cy="141.4" r="1.4" fill="#fff4e0" opacity="0.7"/>
<circle cx="34.8" cy="139.1" r="1.1" fill="#fff4e0" opacity="0.7"/>
<circle cx="28.1" cy="142.9" r="0.9" fill="#ffe0a0" opacity="0.7"/>
<path d="M92 116 L101 113 L132 119 L178 126 L187 127 L187 132 L140 134 L96 138Z" fill="#d8f6fa" opacity="0.95"/>
<rect x="99" y="110" width="2" height="6" fill="#f0f0d0"/>
<ellipse cx="121" cy="135" rx="14" ry="8" fill="#4c3c48"/>
<ellipse cx="153" cy="131" rx="14" ry="7" fill="#463e54"/>
<ellipse cx="139" cy="120" rx="10" ry="4" fill="#3c5490"/>
<ellipse cx="160" cy="122" rx="10" ry="4" fill="#3c5490"/>
<path d="M190 126 C205 118 235 117 256 121 L256 135 C232 137 200 135 190 126Z" fill="#2e5ca8"/>
<ellipse cx="118" cy="160" rx="34" ry="7" stroke="#e8b040" stroke-width="2.4" fill="none"/>
<ellipse cx="190" cy="160" rx="32" ry="6" stroke="#e8b848" stroke-width="2.4" fill="none"/>
<ellipse cx="252" cy="160" rx="28" ry="6" stroke="#e0c060" stroke-width="2" fill="none"/>
<circle cx="80" cy="154" r="2.2" fill="#ffd070"/>
<path d="M222 146 L290 146 L296 164 L215 164Z" fill="#6068a0" opacity="0.7"/>
<path d="M229 131 L287 131 L287 146 L229 146Z" fill="#d6ddf4"/>
<path d="M262 8 C266 5 282 5 286 8 C291 24 294 52 294 90 C294 110 293 122 292 132 L256 132 C255 122 254 110 254 90 C254 52 257 24 262 8Z" fill="url(#tw)"/><rect x="273" y="2" width="2" height="6" fill="#9ab080"/>
<line x1="255" y1="12" x2="293" y2="12" stroke="#7a6028" stroke-width="0.9" opacity="0.4"/>
<line x1="255" y1="19" x2="293" y2="19" stroke="#7a6028" stroke-width="0.9" opacity="0.4"/>
<line x1="255" y1="26" x2="293" y2="26" stroke="#7a6028" stroke-width="0.9" opacity="0.4"/>
<line x1="255" y1="33" x2="293" y2="33" stroke="#7a6028" stroke-width="0.9" opacity="0.4"/>
<line x1="255" y1="40" x2="293" y2="40" stroke="#7a6028" stroke-width="0.9" opacity="0.4"/>
<line x1="255" y1="47" x2="293" y2="47" stroke="#7a6028" stroke-width="0.9" opacity="0.4"/>
<line x1="255" y1="54" x2="293" y2="54" stroke="#7a6028" stroke-width="0.9" opacity="0.4"/>
<line x1="255" y1="61" x2="293" y2="61" stroke="#7a6028" stroke-width="0.9" opacity="0.4"/>
<line x1="255" y1="68" x2="293" y2="68" stroke="#7a6028" stroke-width="0.9" opacity="0.4"/>
<line x1="255" y1="75" x2="293" y2="75" stroke="#7a6028" stroke-width="0.9" opacity="0.4"/>
<line x1="255" y1="82" x2="293" y2="82" stroke="#7a6028" stroke-width="0.9" opacity="0.4"/>
<line x1="255" y1="89" x2="293" y2="89" stroke="#7a6028" stroke-width="0.9" opacity="0.4"/>
<line x1="255" y1="96" x2="293" y2="96" stroke="#7a6028" stroke-width="0.9" opacity="0.4"/>
<line x1="255" y1="103" x2="293" y2="103" stroke="#7a6028" stroke-width="0.9" opacity="0.4"/>
<line x1="255" y1="110" x2="293" y2="110" stroke="#7a6028" stroke-width="0.9" opacity="0.4"/>
<line x1="255" y1="117" x2="293" y2="117" stroke="#7a6028" stroke-width="0.9" opacity="0.4"/>
<line x1="255" y1="124" x2="293" y2="124" stroke="#7a6028" stroke-width="0.9" opacity="0.4"/>
<line x1="255" y1="131" x2="293" y2="131" stroke="#7a6028" stroke-width="0.9" opacity="0.4"/>
<line x1="262" y1="7" x2="262" y2="132" stroke="#7a6028" stroke-width="0.6" opacity="0.3"/>
<line x1="268" y1="7" x2="268" y2="132" stroke="#7a6028" stroke-width="0.6" opacity="0.3"/>
<line x1="274" y1="7" x2="274" y2="132" stroke="#7a6028" stroke-width="0.6" opacity="0.3"/>
<line x1="280" y1="7" x2="280" y2="132" stroke="#7a6028" stroke-width="0.6" opacity="0.3"/>
<line x1="286" y1="7" x2="286" y2="132" stroke="#7a6028" stroke-width="0.6" opacity="0.3"/>
<path d="M274 141 C298 126 338 119 376 122 L376 156 L300 156 C288 153 279 148 274 141Z" fill="#1c52a0"/>
<rect x="282" y="0" width="100" height="164" fill="url(#fade)"/></g></g>
<defs><radialGradient id="navdark" cx="0.15" cy="0.9" r="0.9"><stop offset="0" stop-color="#1452b0" stop-opacity="0.75"/><stop offset="0.6" stop-color="#1a64c4" stop-opacity="0.35"/><stop offset="1" stop-color="#1b89f1" stop-opacity="0"/></radialGradient></defs>
<rect x="0" y="164" width="380" height="68" fill="url(#navdark)"/>
<g stroke="#8cc4f4" fill="none" opacity="0.22" filter="url(#soft)"><path d="M0 190 C40 182 90 186 120 200 C135 210 128 225 110 232" stroke-width="2.5"/><path d="M70 232 C110 210 150 190 190 172" stroke-width="2"/><path d="M90 232 C130 210 170 190 220 174" stroke-width="1.5"/><path d="M160 200 C200 190 250 188 300 190" stroke-width="1.2"/><path d="M38 180 C60 175 120 178 170 166" stroke-width="1.5"/></g>
<ellipse cx="12" cy="172" rx="12" ry="6" fill="#5ad0f0" opacity="0.2" filter="url(#soft)"/>
</svg>
<div class="abs title">河南省建筑市场监管公共服务平台</div>
<div class="abs url">hngcjs.hnjs.henan.gov.cn</div>
<div class="abs login">登录</div>

<div class="tab on" style="left:959px;width:131px">建设工程企业</div>
<div class="tab" style="left:1094px;width:98px">从业人员</div>
<div class="tab" style="left:1197px;width:98px">建设项目</div>
<div class="tab" style="left:1300px;width:98px">信用信息</div>
<div class="search"><span>请输入关键词，例如企业名称，统一社会信用代码</span></div>
<div class="sbtn">搜索</div>

<div class="nv" style="left:374px">首页</div>
<div class="nv" style="left:498px">数据服务</div>
<div class="nv" style="left:656px">信用信息</div>
<div class="nv" style="left:813px">公示公告</div>
<div class="nv" style="left:971px">电子证照</div>
<div class="nv" style="left:1118px">建筑工人</div>
<div class="nv" style="left:1271px">重点监管</div>
<div class="nv" style="left:1423px">下载专区</div>

<div class="abs crumb">当前位置:首页&gt;任职信息异常的注册人员</div>

<div id="panel"><div class="ph"><b>数据筛选</b></div></div>

<div class="lbl" style="left:398px;width:120px;top:390px">人员类别:</div>
<div class="inp" style="left:528px;top:379px;height:41px"><span style="left:12px;line-height:35px">请选择人员类别</span>
<svg style="position:absolute;left:168px;top:15px" width="12" height="6"><path d="M0.5 0.5 L11 0.5 L5.75 5.5Z" fill="#999"/></svg></div>
<div class="lbl" style="left:766px;width:120px;top:390px">姓名:</div>
<div class="inp" style="left:896px;top:380px"><span>请输入人员姓名</span></div>
<div class="lbl" style="left:1134px;width:120px;top:390px">身份证号:</div>
<div class="inp" style="left:1264px;top:380px"><span>请输入身份证号</span></div>

<div class="lbl" style="left:398px;width:120px;top:440px">执业印章号:</div>
<div class="inp" style="left:528px;top:430px"><span>请输入注册号</span></div>
<div class="lbl" style="left:766px;width:120px;top:440px">注册单位:</div>
<div class="inp" style="left:896px;top:430px"><span>请输入注册单位</span></div>
<div class="lbl" style="left:1104px;width:150px;top:440px">企业所在注册地:</div>
<div class="inp" style="left:1264px;top:430px;border-radius:0"><span style="left:14px;color:#707070;top:1px">所有</span>
<svg style="position:absolute;left:174px;top:16px" width="10" height="7"><path d="M1 1 L5 5 L9 1" stroke="#999" stroke-width="1.7" fill="none"/></svg></div>

<div class="btn" style="left:528px;background:#1a73d0;color:#fff">查询</div>
<div class="btn" style="left:628px;background:#c3def6;border:1px solid #7db3e8;color:#1a6fce;line-height:38px">重置</div>

<svg style="position:absolute;left:489px;top:550px" width="40" height="36" viewBox="0 0 40 36">
<path d="M20 2 Q21.5 2 22.5 3.6 L38.5 31 Q39.8 34.5 36 34.5 L4 34.5 Q0.2 34.5 1.5 31 L17.5 3.6 Q18.5 2 20 2Z" fill="#d9261c"/>
<rect x="18.8" y="10" width="2.4" height="15" fill="#fff"/>
<rect x="18.8" y="27" width="2.4" height="3" fill="#fff"/>
</svg>
<div class="warn">被标注异常的注册执业人员，需于2024年10月底前完成整改。整改完成后，联系企业注册地市级住建局建管科取消标注。</div>

<div id="thead"></div>
<div class="th" style="left:437px;width:40px;top:635px">姓名</div>
<div class="th" style="left:523px;width:120px;top:635px">注册类型及等级</div>
<div class="th" style="left:723px;width:120px;top:635px">注册单位</div>
<div class="th" style="left:913px;width:120px;top:635px">注册专业</div>
<div class="th" style="left:1053px;width:120px;top:635px">执业印章号</div>
<div class="th" style="left:1297px;width:120px;top:635px">标注原因</div>

<div class="hr" style="top:733px"></div>
<svg class="stamp" style="top:691px" viewBox="0 0 24 24"><circle cx="12" cy="12" r="11" stroke="#ec2a30" stroke-width="1.3" fill="none"/><g transform="rotate(-45 12 12)" fill="#ec2a30"><text x="12" y="15.2" font-size="8.6" font-weight="bold" text-anchor="middle" font-family="Liberation Sans,sans-serif">异常</text></g></svg>
<div class="td red" style="left:444px;top:692px;text-align:left">任</div>
<div class="td" style="left:523px;width:120px;top:692px">二级注册建造师</div>
<div class="td red" style="left:692px;top:692px;text-align:left">河南省<span style="display:inline-block;width:73px"></span>程有限公司</div>
<div class="td" style="left:913px;width:120px;top:672px">公路工程<br>建筑工程<br>市政公用工程</div>
<div class="td" style="left:1060px;top:692px;text-align:left">豫241</div>
<div class="td" style="left:1257px;width:200px;top:692px">涉嫌受聘于两家及以上单位</div>
<div class="hr" style="top:788px"></div>
<svg class="stamp" style="top:749px" viewBox="0 0 24 24"><circle cx="12" cy="12" r="11" stroke="#ec2a30" stroke-width="1.3" fill="none"/><g transform="rotate(-45 12 12)" fill="#ec2a30"><text x="12" y="15.2" font-size="8.6" font-weight="bold" text-anchor="middle" font-family="Liberation Sans,sans-serif">异常</text></g></svg>
<div class="td red" style="left:437px;top:750px;text-align:left">武</div>
<div class="td" style="left:523px;width:120px;top:750px">二级注册建造师</div>
<div class="td red" style="left:699px;top:750px;text-align:left">河南<span style="display:inline-block;width:56px"></span>工程有限公司</div>
<div class="td" style="left:913px;width:120px;top:750px">不分专业</div>
<div class="td" style="left:1060px;top:750px;text-align:left">豫24</div>
<div class="td" style="left:1257px;width:200px;top:750px">涉嫌受聘于两家及以上单位</div>
<div class="hr" style="top:843px"></div>
<svg class="stamp" style="top:805px" viewBox="0 0 24 24"><circle cx="12" cy="12" r="11" stroke="#ec2a30" stroke-width="1.3" fill="none"/><g transform="rotate(-45 12 12)" fill="#ec2a30"><text x="12" y="15.2" font-size="8.6" font-weight="bold" text-anchor="middle" font-family="Liberation Sans,sans-serif">异常</text></g></svg>
<div class="td red" style="left:444px;top:806px;text-align:left">王</div>
<div class="td" style="left:523px;width:120px;top:806px">二级注册建造师</div>
<div class="td red" style="left:699px;top:806px;text-align:left">河南<span style="display:inline-block;width:42px"></span>路工程有限公司</div>
<div class="td" style="left:913px;width:120px;top:806px">公路工程</div>
<div class="td" style="left:1060px;top:806px;text-align:left">豫24</div>
<div class="td" style="left:1257px;width:200px;top:806px">涉嫌受聘于两家及以上单位</div>
<div class="hr" style="top:898px"></div>
<svg class="stamp" style="top:859px" viewBox="0 0 24 24"><circle cx="12" cy="12" r="11" stroke="#ec2a30" stroke-width="1.3" fill="none"/><g transform="rotate(-45 12 12)" fill="#ec2a30"><text x="12" y="15.2" font-size="8.6" font-weight="bold" text-anchor="middle" font-family="Liberation Sans,sans-serif">异常</text></g></svg>
<div class="td red" style="left:437px;top:860px;text-align:left">田</div>
<div class="td" style="left:523px;width:120px;top:860px">二级注册建造师</div>
<div class="td red" style="left:707px;top:860px;text-align:left">诚<span style="display:inline-block;width:42px"></span>工集团有限公司</div>
<div class="td" style="left:913px;width:120px;top:860px">水利水电工程</div>
<div class="td" style="left:1060px;top:860px;text-align:left">豫2</div>
<div class="td" style="left:1257px;width:200px;top:860px">涉嫌受聘于两家及以上单位</div>
<div style="position:absolute;left:458.0px;top:698px;width:13.6px;height:10px;background:#fba4a8"></div>
<div style="position:absolute;left:458.0px;top:708px;width:13.6px;height:6px;background:#fde6e8"></div>
<div style="position:absolute;left:451.0px;top:751px;width:15.1px;height:18px;background:#fbb8bc"></div>
<div style="position:absolute;left:465.5px;top:751px;width:15.1px;height:18px;background:#faa4a8"></div>
<div style="position:absolute;left:455.0px;top:745px;width:15.6px;height:6px;background:#fdeeee"></div>
<div style="position:absolute;left:454.0px;top:806px;width:10.1px;height:20px;background:#fde0e2"></div>
<div style="position:absolute;left:463.5px;top:806px;width:10.1px;height:20px;background:#fcd0d4"></div>
<div style="position:absolute;left:451.0px;top:864px;width:15.1px;height:12px;background:#fbb4b8"></div>
<div style="position:absolute;left:465.5px;top:864px;width:15.1px;height:12px;background:#fba8ac"></div>
<div style="position:absolute;left:455.0px;top:876px;width:25.6px;height:13px;background:#fdeef0"></div>
<div style="position:absolute;left:734.0px;top:697px;width:12.8px;height:11px;background:#fbb4b8"></div>
<div style="position:absolute;left:746.2px;top:697px;width:12.8px;height:11px;background:#fbaeb2"></div>
<div style="position:absolute;left:758.3px;top:697px;width:12.8px;height:11px;background:#faa8aa"></div>
<div style="position:absolute;left:770.5px;top:697px;width:12.8px;height:11px;background:#fba2a4"></div>
<div style="position:absolute;left:782.7px;top:697px;width:12.8px;height:11px;background:#fbb0b2"></div>
<div style="position:absolute;left:794.8px;top:697px;width:12.8px;height:11px;background:#fcc4c8"></div>
<div style="position:absolute;left:734.0px;top:708px;width:73.6px;height:3px;background:#fef2f2"></div>
<div style="position:absolute;left:727.0px;top:752px;width:14.6px;height:12px;background:#fcc8cc"></div>
<div style="position:absolute;left:741.0px;top:752px;width:14.6px;height:12px;background:#fba8ac"></div>
<div style="position:absolute;left:755.0px;top:752px;width:14.6px;height:12px;background:#fa9ea2"></div>
<div style="position:absolute;left:769.0px;top:752px;width:14.6px;height:12px;background:#fbb4b8"></div>
<div style="position:absolute;left:783.0px;top:752px;width:14.6px;height:12px;background:#fcc0c4"></div>
<div style="position:absolute;left:727.0px;top:748px;width:63.6px;height:4px;background:#fdeaea"></div>
<div style="position:absolute;left:727.0px;top:806px;width:11.8px;height:15px;background:#fde0e2"></div>
<div style="position:absolute;left:738.2px;top:806px;width:11.8px;height:15px;background:#fccdd0"></div>
<div style="position:absolute;left:749.5px;top:806px;width:11.8px;height:15px;background:#fde4e6"></div>
<div style="position:absolute;left:760.8px;top:806px;width:11.8px;height:15px;background:#fcd8da"></div>
<div style="position:absolute;left:740.0px;top:802px;width:32.6px;height:4px;background:#feeeee"></div>




<div style="position:absolute;left:1092.0px;top:696px;width:12.6px;height:12px;background:#bcbcbe"></div>
<div style="position:absolute;left:1104.0px;top:696px;width:12.6px;height:12px;background:#d4d2cc"></div>
<div style="position:absolute;left:1116.0px;top:696px;width:12.6px;height:12px;background:#c0c0c4"></div>
<div style="position:absolute;left:1128.0px;top:696px;width:12.6px;height:12px;background:#c8c0bc"></div>
<div style="position:absolute;left:1140.0px;top:696px;width:12.6px;height:12px;background:#bcc0c4"></div>
<div style="position:absolute;left:1152.0px;top:696px;width:12.6px;height:12px;background:#c8c4c0"></div>
<div style="position:absolute;left:1083.0px;top:756px;width:11.7px;height:12px;background:#c8cacc"></div>
<div style="position:absolute;left:1094.1px;top:756px;width:11.7px;height:12px;background:#bfbfc2"></div>
<div style="position:absolute;left:1105.2px;top:756px;width:11.7px;height:12px;background:#d0cec8"></div>
<div style="position:absolute;left:1116.4px;top:756px;width:11.7px;height:12px;background:#c4c4c8"></div>
<div style="position:absolute;left:1127.5px;top:756px;width:11.7px;height:12px;background:#d4d2ce"></div>
<div style="position:absolute;left:1138.6px;top:756px;width:11.7px;height:12px;background:#cccccc"></div>
<div style="position:absolute;left:1149.8px;top:756px;width:11.7px;height:12px;background:#dcd8d2"></div>
<div style="position:absolute;left:1160.9px;top:756px;width:11.7px;height:12px;background:#e6e8ee"></div>
<div style="position:absolute;left:1083.0px;top:750px;width:89.6px;height:6px;background:#f4f4f4"></div>
<div style="position:absolute;left:1083.0px;top:805px;width:12.2px;height:18px;background:#e6e6e8"></div>
<div style="position:absolute;left:1094.6px;top:805px;width:12.2px;height:18px;background:#dddde0"></div>
<div style="position:absolute;left:1106.2px;top:805px;width:12.2px;height:18px;background:#ebebea"></div>
<div style="position:absolute;left:1117.9px;top:805px;width:12.2px;height:18px;background:#e0e2e6"></div>
<div style="position:absolute;left:1129.5px;top:805px;width:12.2px;height:18px;background:#e8e6e4"></div>
<div style="position:absolute;left:1141.1px;top:805px;width:12.2px;height:18px;background:#e2e4e8"></div>
<div style="position:absolute;left:1152.8px;top:805px;width:12.2px;height:18px;background:#e6e4e2"></div>
<div style="position:absolute;left:1164.4px;top:805px;width:12.2px;height:18px;background:#f0f0f2"></div>
<div style="position:absolute;left:1082.0px;top:864px;width:12.6px;height:13px;background:#c8cccc"></div>
<div style="position:absolute;left:1094.0px;top:864px;width:12.6px;height:13px;background:#bcbcc0"></div>
<div style="position:absolute;left:1106.0px;top:864px;width:12.6px;height:13px;background:#ccc8c4"></div>
<div style="position:absolute;left:1118.0px;top:864px;width:12.6px;height:13px;background:#b0b0b8"></div>
<div style="position:absolute;left:1130.0px;top:864px;width:12.6px;height:13px;background:#c8c8c8"></div>
<div style="position:absolute;left:1142.0px;top:864px;width:12.6px;height:13px;background:#d0d0d0"></div>
<div style="position:absolute;left:1154.0px;top:864px;width:12.6px;height:13px;background:#c4c4c4"></div>
<div style="position:absolute;left:715.0px;top:863px;width:12.6px;height:13px;background:#fbb8bc"></div><div style="position:absolute;left:727.0px;top:863px;width:12.6px;height:13px;background:#fcc8cc"></div><div style="position:absolute;left:739.0px;top:863px;width:12.6px;height:13px;background:#fcd4d6"></div><div style="position:absolute;left:751.0px;top:863px;width:12.6px;height:13px;background:#fbc0c4"></div>
<svg class="stamp" style="top:914px" viewBox="0 0 24 24"><circle cx="12" cy="12" r="11" stroke="#ec2a30" stroke-width="1.3" fill="none"/></svg>
<div style="position:absolute;left:0;top:918px;width:1877px;height:1px;background:#201a1a"></div>
</body></html>
